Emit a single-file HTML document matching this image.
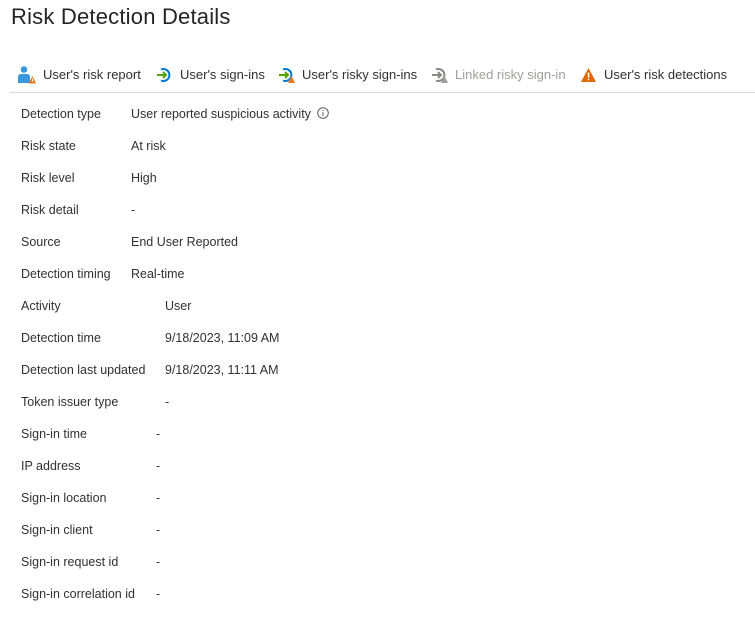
<!DOCTYPE html>
<html><head><style>
body{margin:0;width:755px;height:626px;background:#fff;font-family:"Liberation Sans",sans-serif;color:#323130;position:relative;overflow:hidden}
.t{position:absolute;left:11px;top:4px;font-size:22px;color:#242424;letter-spacing:0.2px}
.tb{position:absolute;top:66px;font-size:13px;white-space:nowrap;line-height:18px}
.tb svg{position:absolute;left:0;top:0}
.line{position:absolute;left:10px;right:0;top:92px;height:1px;background:#d6d6d6}
.r{position:absolute;font-size:12.5px;line-height:16px;white-space:nowrap}
</style></head><body>
<div class="t">Risk Detection Details</div>

<div class="tb" style="left:18px"><svg width="18" height="18" viewBox="0 0 18 18"><circle cx="6" cy="3.5" r="3.3" fill="#3a96dd"/><path d="M0 17 V11 Q0 8 3 8 H9 Q12 8 12 11 V17Z" fill="#3a96dd"/><path d="M10.5 17.5 L14.5 10 L18 17.5Z" fill="#e3791c"/><rect x="14" y="12.5" width="1" height="3" fill="#fff"/></svg><span style="position:absolute;left:25px">User's risk report</span></div>
<div class="tb" style="left:156px"><svg width="16" height="18" viewBox="0 0 16 18"><path d="M5 3.5 A6 6 0 1 1 5 14.5" fill="none" stroke="#0078d4" stroke-width="2"/><path d="M1 9 H10 M7 6 L10 9 L7 12" fill="none" stroke="#57a300" stroke-width="2"/></svg><span style="position:absolute;left:24px">User's sign-ins</span></div>
<div class="tb" style="left:278px"><svg width="18" height="18" viewBox="0 0 18 18"><path d="M5 3.5 A6 6 0 1 1 5 14.5" fill="none" stroke="#0078d4" stroke-width="2"/><path d="M1 9 H10 M7 6 L10 9 L7 12" fill="none" stroke="#57a300" stroke-width="2"/><path d="M10 17 L13.5 10 L17 17Z" fill="#e3791c"/></svg><span style="position:absolute;left:24px">User's risky sign-ins</span></div>
<div class="tb" style="left:431px;color:#a19f9d"><svg width="18" height="18" viewBox="0 0 18 18"><path d="M5 3.5 A6 6 0 1 1 5 14.5" fill="none" stroke="#8a8886" stroke-width="2"/><path d="M1 9 H10 M7 6 L10 9 L7 12" fill="none" stroke="#8a8886" stroke-width="2"/><path d="M10 17 L13.5 10 L17 17Z" fill="#a19f9d"/></svg><span style="position:absolute;left:24px">Linked risky sign-in</span></div>
<div class="tb" style="left:580px"><svg width="18" height="18" viewBox="0 0 18 18"><path d="M1 16 L8.5 2 L16 16Z" fill="#d86a00"/><rect x="7.7" y="6.5" width="1.6" height="5" fill="#fff"/><rect x="7.7" y="12.7" width="1.6" height="1.6" fill="#fff"/></svg><span style="position:absolute;left:24px">User's risk detections</span></div>
<div class="line"></div>

<div class="r" style="left:21px;top:106px">Detection type</div><div class="r" style="left:131px;top:106px">User reported suspicious activity <svg width="12" height="12" viewBox="0 0 12 12" style="vertical-align:-1px;margin-left:3px"><circle cx="6" cy="6" r="5.3" fill="none" stroke="#605e5c"/><rect x="5.5" y="5" width="1" height="4" fill="#605e5c"/><rect x="5.5" y="3" width="1" height="1" fill="#605e5c"/></svg></div>
<div class="r" style="left:21px;top:138px">Risk state</div><div class="r" style="left:131px;top:138px">At risk</div>
<div class="r" style="left:21px;top:170px">Risk level</div><div class="r" style="left:131px;top:170px">High</div>
<div class="r" style="left:21px;top:202px">Risk detail</div><div class="r" style="left:131px;top:202px">-</div>
<div class="r" style="left:21px;top:234px">Source</div><div class="r" style="left:131px;top:234px">End User Reported</div>
<div class="r" style="left:21px;top:266px">Detection timing</div><div class="r" style="left:131px;top:266px">Real-time</div>
<div class="r" style="left:21px;top:298px">Activity</div><div class="r" style="left:165px;top:298px">User</div>
<div class="r" style="left:21px;top:330px">Detection time</div><div class="r" style="left:165px;top:330px">9/18/2023, 11:09 AM</div>
<div class="r" style="left:21px;top:362px">Detection last updated</div><div class="r" style="left:165px;top:362px">9/18/2023, 11:11 AM</div>
<div class="r" style="left:21px;top:394px">Token issuer type</div><div class="r" style="left:165px;top:394px">-</div>
<div class="r" style="left:21px;top:426px">Sign-in time</div><div class="r" style="left:156px;top:426px">-</div>
<div class="r" style="left:21px;top:458px">IP address</div><div class="r" style="left:156px;top:458px">-</div>
<div class="r" style="left:21px;top:490px">Sign-in location</div><div class="r" style="left:156px;top:490px">-</div>
<div class="r" style="left:21px;top:522px">Sign-in client</div><div class="r" style="left:156px;top:522px">-</div>
<div class="r" style="left:21px;top:554px">Sign-in request id</div><div class="r" style="left:156px;top:554px">-</div>
<div class="r" style="left:21px;top:586px">Sign-in correlation id</div><div class="r" style="left:156px;top:586px">-</div>
</body></html>
